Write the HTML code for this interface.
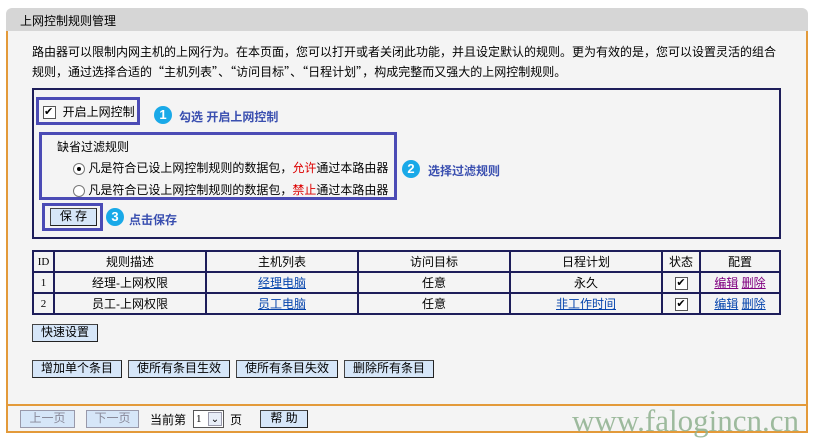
<!DOCTYPE html>
<html><head><meta charset="utf-8"><style>
*{margin:0;padding:0;box-sizing:border-box}
body{width:814px;height:437px;background:#fff;position:relative;overflow:hidden;font-family:"Liberation Sans","Noto Sans CJK SC",sans-serif;font-size:12px;color:#000}
.a{position:absolute}
.hdr{left:6px;top:8px;width:802px;height:23px;background:#d6d6d6;border-radius:6px 6px 0 0;padding:4px 0 0 14px;font-size:12px}
.main{left:6px;top:31px;width:802px;height:402px;background:#f4f4f4;border-left:2px solid #e39a3a;border-right:2px solid #e39a3a;border-bottom:2px solid #e39a3a}
.sep{left:8px;top:404px;width:798px;height:2px;background:#e39a3a}
.box{border:2px solid #1e1e5a}
.hl{border:3px solid #4b4bb5}
.btn{background:#d6e6f8;border:1px solid #444;border-right-color:#222;border-bottom-color:#222;text-align:center;line-height:15px;font-size:12px;height:18px}
.circ{width:18px;height:18px;border-radius:50%;background:#19a9e8;color:#fff;font-weight:bold;text-align:center;line-height:18px;font-size:13px}
.lbl{color:#3a4fb0;font-weight:bold;font-size:12px}
table{border-collapse:collapse;position:absolute;left:32px;top:250px;width:749px}
td{border:2px solid #1e1e5a;height:21px;text-align:center;font-size:12px;padding:0}
a{color:#0645ad;text-decoration:underline}
.cb{display:inline-block;width:13px;height:13px;border:1px solid #555;background:#fff;font-size:11px;line-height:11px;vertical-align:middle}
.rd{display:inline-block;width:12px;height:12px;border:1px solid #777;border-radius:50%;background:#fff;vertical-align:middle;position:relative}
.q{font-family:"Noto Sans CJK SC",sans-serif}
</style></head><body>
<div class="a hdr">上网控制规则管理</div>
<div class="a main"></div>
<div class="a sep"></div>
<div class="a" style="left:32px;top:42px;width:748px;line-height:20px">路由器可以限制内网主机的上网行为。在本页面，您可以打开或者关闭此功能，并且设定默认的规则。更为有效的是，您可以设置灵活的组合规则，通过选择合适的<span class="q">“</span>主机列表<span class="q">”</span>、<span class="q">“</span>访问目标<span class="q">”</span>、<span class="q">“</span>日程计划<span class="q">”</span>，构成完整而又强大的上网控制规则。</div>
<div class="a box" style="left:32px;top:88px;width:749px;height:151px"></div>
<div class="a hl" style="left:36px;top:97px;width:104px;height:28px"></div>
<div class="a" style="left:43px;top:103px"><span class="cb">✔</span>&nbsp; 开启上网控制</div>
<div class="a circ" style="left:154px;top:106px">1</div>
<div class="a lbl" style="left:179px;top:108px">勾选 开启上网控制</div>
<div class="a hl" style="left:39px;top:132px;width:358px;height:68px"></div>
<div class="a" style="left:57px;top:138px">缺省过滤规则</div>
<div class="a" style="left:73px;top:159px"><span class="rd"><span style="position:absolute;left:3px;top:3px;width:4px;height:4px;border-radius:50%;background:#000"></span></span> 凡是符合已设上网控制规则的数据包，<span style="color:#d00">允许</span>通过本路由器</div>
<div class="a" style="left:73px;top:181px"><span class="rd"></span> 凡是符合已设上网控制规则的数据包，<span style="color:#d00">禁止</span>通过本路由器</div>
<div class="a circ" style="left:402px;top:160px">2</div>
<div class="a lbl" style="left:428px;top:162px">选择过滤规则</div>
<div class="a hl" style="left:42px;top:203px;width:61px;height:28px"></div>
<div class="a btn" style="left:50px;top:208px;width:47px">保 存</div>
<div class="a circ" style="left:106px;top:208px">3</div>
<div class="a lbl" style="left:129px;top:211px">点击保存</div>
<table>
<tr><td style="width:21px;font-family:'Liberation Serif';font-size:11px">ID</td><td style="width:152px">规则描述</td><td style="width:152px">主机列表</td><td style="width:152px">访问目标</td><td style="width:152px">日程计划</td><td style="width:38px">状态</td><td>配置</td></tr>
<tr><td style="font-family:'Liberation Serif';font-size:11px">1</td><td>经理-上网权限</td><td><a>经理电脑</a></td><td>任意</td><td>永久</td><td><span class="cb">✔</span></td><td><a style="color:#800080">编辑</a> <a style="color:#800080">删除</a></td></tr>
<tr><td style="font-family:'Liberation Serif';font-size:11px">2</td><td>员工-上网权限</td><td><a>员工电脑</a></td><td>任意</td><td><a>非工作时间</a></td><td><span class="cb">✔</span></td><td><a>编辑</a> <a>删除</a></td></tr>
</table>
<div class="a btn" style="left:32px;top:324px;width:66px">快速设置</div>
<div class="a btn" style="left:32px;top:360px;width:90px">增加单个条目</div>
<div class="a btn" style="left:128px;top:360px;width:102px">使所有条目生效</div>
<div class="a btn" style="left:236px;top:360px;width:102px">使所有条目失效</div>
<div class="a btn" style="left:344px;top:360px;width:90px">删除所有条目</div>
<div class="a btn" style="left:20px;top:410px;width:55px;color:#889;border-color:#99a">上一页</div>
<div class="a btn" style="left:86px;top:410px;width:53px;color:#889;border-color:#99a">下一页</div>
<div class="a" style="left:150px;top:411px">当前第</div>
<div class="a" style="left:193px;top:410px;width:31px;height:18px;border:1px solid #555;background:#fff;font-size:11px;font-family:'Liberation Serif';padding-left:2px;line-height:16px">1<span style="position:absolute;right:1px;top:1px;width:14px;height:14px;background:#e8eef8;border:1px solid #99a;font-size:10px;text-align:center;line-height:13px">⌄</span></div>
<div class="a" style="left:230px;top:411px">页</div>
<div class="a btn" style="left:260px;top:410px;width:48px">帮 助</div>
<div class="a" style="left:572px;top:403px;font-family:'Liberation Serif',serif;font-size:31px;color:#8fb18f;opacity:.85">www.falogincn.cn</div>
</body></html>
